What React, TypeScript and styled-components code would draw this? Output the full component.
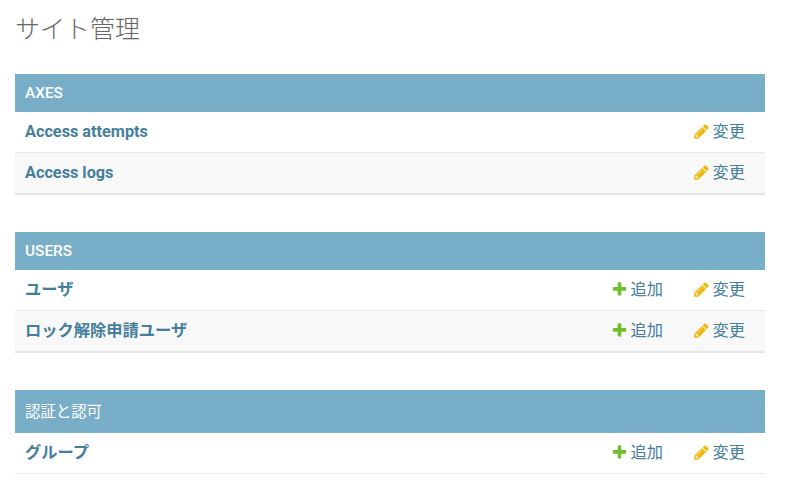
import React from "react";
import styled, { createGlobalStyle } from "styled-components";

const GlobalStyle = createGlobalStyle`
  html, body {
    margin: 0;
    padding: 0;
    height: 100%;
    overflow: hidden;
    background: #fff;
    font-family: Roboto, "Noto Sans CJK JP", sans-serif;
  }
`;

const Page = styled.div`
  padding: 15px 26px 0 15px;
  height: 483px;
  box-sizing: border-box;
  overflow: hidden;
`;

const Title = styled.h1`
  margin: 0 0 29px;
  font-size: 25px;
  line-height: 30px;
  font-weight: 300;
  color: #666;
`;

const Module = styled.section`
  margin-bottom: 37px;
`;

const Caption = styled.div<{ $cjk?: boolean }>`
  height: ${({ $cjk }) => ($cjk ? "43px" : "38px")};
  box-sizing: border-box;
  display: flex;
  align-items: center;
  padding: 0 10px ${({ $cjk }) => ($cjk ? "4px" : "0")};
  background: #79aec8;
  color: #fff;
  font-size: 15.4px;
  font-weight: ${({ $cjk }) => ($cjk ? 400 : 500)};
`;

const Row = styled.div<{ $alt?: boolean; $last?: boolean }>`
  height: ${({ $last }) => ($last ? "42px" : "41px")};
  box-sizing: border-box;
  display: flex;
  align-items: center;
  padding: 0 20px 0 10px;
  line-height: 20px;
  background: ${({ $alt }) => ($alt ? "#f8f8f8" : "#fff")};
  border-bottom: ${({ $last }) => ($last ? "2px solid #e5e5e5" : "1px solid #e8e8e8")};
`;

const Name = styled.a`
  flex: 1;
  font-size: 16.25px;
  font-weight: 700;
  color: #447e9b;
`;

const Action = styled.a`
  display: flex;
  align-items: center;
  justify-content: flex-end;
  gap: 3px;
  font-size: 16.25px;
  color: #447e9b;

  svg {
    width: 17px;
    height: 17px;
    margin-bottom: 2px;
  }
`;

const AddAction = styled(Action)`
  width: 53px;
  svg {
    fill: #70bf2b;
  }
`;

const ChangeAction = styled(Action)`
  width: 53px;
  margin-left: 29px;
  svg {
    fill: #efb80b;
  }
`;

const PlusIcon = () => (
  <svg viewBox="0 0 1792 1792">
    <path d="M1600 736v192q0 40-28 68t-68 28h-416v416q0 40-28 68t-68 28h-192q-40 0-68-28t-28-68v-416h-416q-40 0-68-28t-28-68v-192q0-40 28-68t68-28h416v-416q0-40 28-68t68-28h192q40 0 68 28t28 68v416h416q40 0 68 28t28 68z" />
  </svg>
);

const PencilIcon = () => (
  <svg viewBox="0 0 1792 1792">
    <path d="M491 1536l91-91-235-235-91 91v107h128v128h107zm523-928q0-22-22-22-10 0-17 7l-542 542q-7 7-7 17 0 22 22 22 10 0 17-7l542-542q7-7 7-17zm-54-192l416 416-832 832h-416v-416zm683 96q0 53-37 90l-166 166-416-416 166-165q36-38 90-38 53 0 91 38l235 234q37 39 37 91z" />
  </svg>
);

interface Model {
  name: string;
  add: boolean;
}

interface AppGroup {
  title: string;
  cjk?: boolean;
  unfinished?: boolean;
  models: Model[];
}

const groups: AppGroup[] = [
  {
    title: "AXES",
    models: [
      { name: "Access attempts", add: false },
      { name: "Access logs", add: false },
    ],
  },
  {
    title: "USERS",
    models: [
      { name: "ユーザ", add: true },
      { name: "ロック解除申請ユーザ", add: true },
    ],
  },
  {
    title: "認証と認可",
    cjk: true,
    unfinished: true,
    models: [{ name: "グループ", add: true }],
  },
];

export default function App() {
  return (
    <Page>
      <GlobalStyle />
      <Title>サイト管理</Title>
      {groups.map((group) => (
        <Module key={group.title}>
          <Caption $cjk={group.cjk}>{group.title}</Caption>
          {group.models.map((model, i) => (
            <Row
              key={model.name}
              $alt={i % 2 === 1}
              $last={!group.unfinished && i === group.models.length - 1}
            >
              <Name>{model.name}</Name>
              {model.add && (
                <AddAction>
                  <PlusIcon />
                  追加
                </AddAction>
              )}
              <ChangeAction>
                <PencilIcon />
                変更
              </ChangeAction>
            </Row>
          ))}
        </Module>
      ))}
    </Page>
  );
}
